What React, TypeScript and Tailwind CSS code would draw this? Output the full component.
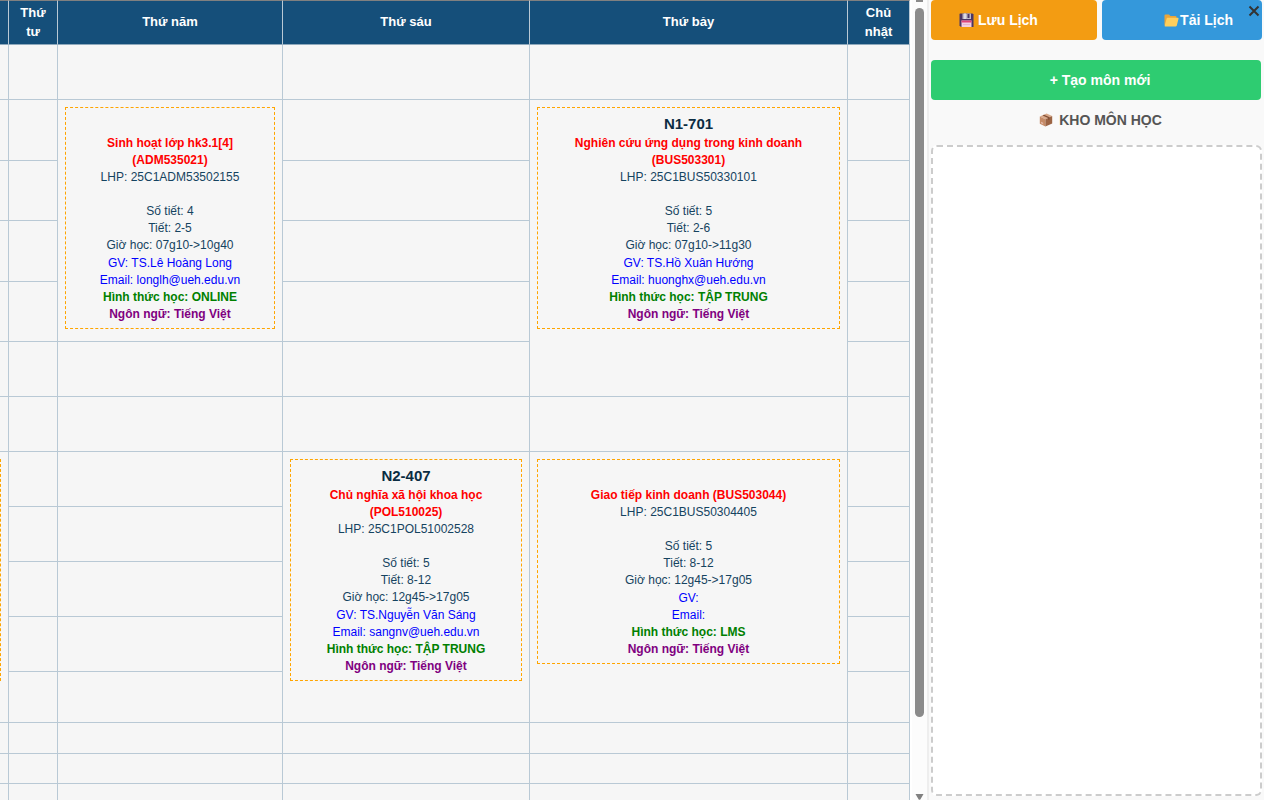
import { useState } from "react";

type Course = {
  room?: string;
  name: string[];
  classCode: string;
  count: number;
  periods: string;
  time: string;
  teacher?: string;
  email?: string;
  mode: string;
  lang: string;
};

type Slot = { span: number; course: Course };

const DAYS = ["Thứ ba", "Thứ tư", "Thứ năm", "Thứ sáu", "Thứ bảy", "Chủ nhật"];

const COL_WIDTHS = ["w-[9px]", "w-[49px]", "w-[225px]", "w-[247px]", "", "w-[62px]"];

const ROW_HEIGHTS = [
  "h-[55px]", "h-[61px]", "h-[60px]", "h-[61px]", "h-[60px]", "h-[55px]", "h-[55px]", "h-[55px]",
  "h-[55px]", "h-[55px]", "h-[55px]", "h-[51px]", "h-[31px]", "h-[30px]", "h-[31px]",
];

// key: "<period>-<day index>"
const SLOTS: Record<string, Slot> = {
  "2-2": {
    span: 4,
    course: {
      name: ["Sinh hoạt lớp hk3.1[4]", "(ADM535021)"],
      classCode: "25C1ADM53502155",
      count: 4,
      periods: "2-5",
      time: "07g10->10g40",
      teacher: "TS.Lê Hoàng Long",
      email: "longlh@ueh.edu.vn",
      mode: "ONLINE",
      lang: "Tiếng Việt",
    },
  },
  "2-4": {
    span: 5,
    course: {
      room: "N1-701",
      name: ["Nghiên cứu ứng dụng trong kinh doanh", "(BUS503301)"],
      classCode: "25C1BUS50330101",
      count: 5,
      periods: "2-6",
      time: "07g10->11g30",
      teacher: "TS.Hồ Xuân Hướng",
      email: "huonghx@ueh.edu.vn",
      mode: "TẬP TRUNG",
      lang: "Tiếng Việt",
    },
  },
  "8-3": {
    span: 5,
    course: {
      room: "N2-407",
      name: ["Chủ nghĩa xã hội khoa học", "(POL510025)"],
      classCode: "25C1POL51002528",
      count: 5,
      periods: "8-12",
      time: "12g45->17g05",
      teacher: "TS.Nguyễn Văn Sáng",
      email: "sangnv@ueh.edu.vn",
      mode: "TẬP TRUNG",
      lang: "Tiếng Việt",
    },
  },
  "8-4": {
    span: 5,
    course: {
      name: ["Giao tiếp kinh doanh (BUS503044)"],
      classCode: "25C1BUS50304405",
      count: 5,
      periods: "8-12",
      time: "12g45->17g05",
      mode: "LMS",
      lang: "Tiếng Việt",
    },
  },
};

function isCovered(period: number, day: number) {
  return Object.entries(SLOTS).some(([key, slot]) => {
    const [p, d] = key.split("-").map(Number);
    return d === day && period > p && period < p + slot.span;
  });
}

function CourseCard({ course }: { course: Course }) {
  return (
    <div className="cursor-move border border-dashed border-[#ffa500] py-[5px] text-center text-xs leading-[17px] text-[#154360]">
      <p className="h-[22px] text-[15px] leading-[22px] font-bold text-[#0b2c42]">{course.room}</p>
      {course.name.map((line) => (
        <p key={line} className="font-bold text-[#ff0000]">{line}</p>
      ))}
      <p>LHP: {course.classCode}</p>
      <p className="mt-[17px]">Số tiết: {course.count}</p>
      <p>Tiết: {course.periods}</p>
      <p>Giờ học: {course.time}</p>
      <div className="pt-px">
        <p className="text-[#0000ff]">GV: {course.teacher}</p>
        <p className="text-[#0000ff]">Email: {course.email}</p>
        <p className="font-bold text-[#008000]">Hình thức học: {course.mode}</p>
        <p className="font-bold text-[#800080]">Ngôn ngữ: {course.lang}</p>
      </div>
    </div>
  );
}

function Timetable() {
  return (
    <table className="w-full table-fixed border-separate border-spacing-0 bg-[#f6f6f6]">
      <colgroup>
        {COL_WIDTHS.map((w, i) => (
          <col key={i} className={w} />
        ))}
      </colgroup>
      <thead>
        <tr className="h-[45px]">
          {DAYS.map((day, i) => (
            <th
              key={day}
              className="border-t border-r border-b border-t-[#808080] border-r-[#b9c9d5] border-b-[#8fa9bc] bg-[#154f7a] p-0 pb-0.5 text-[13px] leading-[19px] font-bold text-white"
            >
              {i > 0 && <span className="block px-2">{day}</span>}
            </th>
          ))}
        </tr>
      </thead>
      <tbody>
        {ROW_HEIGHTS.map((height, row) => {
          const period = row + 1;
          return (
            <tr key={period} className={height}>
              {DAYS.map((day, i) => {
                // Tuesday's afternoon class is scrolled out, only its right edge shows
                if (i === 0 && period === 8) {
                  return (
                    <td key={day} rowSpan={5} className="border-r border-b border-[#b9c9d5] p-0 pt-[7px] align-top">
                      <div className="h-[222px] w-px border-r border-dashed border-[#ffa500]" />
                    </td>
                  );
                }
                if ((i === 0 && period > 8 && period < 13) || isCovered(period, i)) return null;
                const slot = SLOTS[`${period}-${i}`];
                return (
                  <td
                    key={day}
                    rowSpan={slot?.span}
                    className="border-r border-b border-[#b9c9d5] p-0 align-top"
                  >
                    {slot && (
                      <div className="p-[7px]">
                        <CourseCard course={slot.course} />
                      </div>
                    )}
                  </td>
                );
              })}
            </tr>
          );
        })}
      </tbody>
    </table>
  );
}

function SaveIcon() {
  return (
    <svg width="15" height="15" viewBox="0 0 15 15" aria-hidden="true">
      <path d="M1 0.5H13.5L14.5 1.5V14H2L0.5 12.5V1z" fill="#4a3565" />
      <rect x="3.5" y="0.5" width="8.5" height="5.5" fill="#bcb8c8" />
      <rect x="5" y="0.5" width="2" height="5.5" fill="#dcdae3" />
      <rect x="8.5" y="1" width="2" height="4" fill="#4a3565" />
      <rect x="2.5" y="7.5" width="10" height="6.5" fill="#f4cfe3" />
      <rect x="2.5" y="7.5" width="10" height="2" fill="#e0457b" />
      <path d="M4 11.5H11" stroke="#d8a9c6" strokeWidth="0.7" />
    </svg>
  );
}

function FolderIcon() {
  return (
    <svg width="15" height="13" viewBox="0 0 15 13" aria-hidden="true">
      <path d="M0.5 1.5Q0.5 0.5 1.5 0.5H5L6.5 2H11.5Q12.5 2 12.5 3V11H0.5z" fill="#eaa53a" />
      <path d="M3.6 3.8H13.8Q14.8 3.8 14.5 4.8L12.8 11.5Q12.5 12.5 11.5 12.5H1.2Q0.4 12.5 0.7 11.5L2.6 4.8Q2.8 3.8 3.6 3.8z" fill="#ffcf5c" />
    </svg>
  );
}

function BoxIcon() {
  return (
    <svg width="14" height="14" viewBox="0 0 14 14" aria-hidden="true">
      <path d="M0.8 3.6L7.6 0.6L13.2 3L6.4 6.2z" fill="#d9a98a" />
      <path d="M0.8 3.6L6.4 6.2V13.6L0.8 10.8z" fill="#c58a66" />
      <path d="M6.4 6.2L13.2 3V10.4L6.4 13.6z" fill="#9c6444" />
      <path d="M3.6 2.4L5 1.8L10.6 4.2V6.4L9.2 7V4.9z" fill="#7f4d34" />
      <path d="M2 8.8L4.2 9.8V11.4L2 10.3z" fill="#e3b7a6" />
    </svg>
  );
}

function ScrollRail() {
  return (
    <div className="ml-0.5 flex w-[15px] shrink-0 flex-col items-center bg-[#fcfcfc]" aria-hidden="true">
      <div className="h-0.5 w-[7px] bg-[#8b8b8b]" />
      <div className="mt-1.5 h-[709px] w-[9px] rounded-full bg-[#8b8b8b]" />
      <svg className="mt-auto" width="9" height="6" viewBox="0 0 9 6">
        <path d="M0.5 0H8.5L5.5 5.2Q4.5 6.2 3.5 5.2z" fill="#808080" />
      </svg>
    </div>
  );
}

export default function App() {
  const [open, setOpen] = useState(true);

  return (
    <div className="flex h-screen overflow-hidden bg-white pr-4 font-['Liberation_Sans',Arial,sans-serif]">
      <main className="min-w-0 flex-1 overflow-hidden">
        <Timetable />
      </main>
      <ScrollRail />

      {open && (
        <aside className="relative flex w-[337px] shrink-0 flex-col border-l-2 border-[#eeeeee] bg-[#f9f9f9] pr-0.5 pb-1 pl-0.5 text-sm font-bold">
          <div className="flex gap-[5px] text-white">
            <button className="flex h-10 flex-1 items-center gap-1 rounded bg-[#f39c12] pl-7">
              <SaveIcon /> Lưu Lịch
            </button>
            <button className="flex h-10 w-40 items-center justify-end gap-px rounded bg-[#3498db] pr-[29px]">
              <FolderIcon /> Tải Lịch
            </button>
          </div>
          <button
            onClick={() => setOpen(false)}
            aria-label="Đóng"
            className="absolute top-1 right-[3px] flex size-3.5 items-center justify-center text-[#333333]"
          >
            <svg width="12" height="12" viewBox="0 0 12 12">
              <path d="M1.5 1.5L10.5 10.5M10.5 1.5L1.5 10.5" stroke="currentColor" strokeWidth="2" />
            </svg>
          </button>

          <button className="mt-5 mr-px h-10 rounded bg-[#2ecc71] pl-2 text-white">+ Tạo môn mới</button>

          <h2 className="mt-2.5 flex h-5 items-center justify-center gap-1.5 pl-2 text-[#555555]">
            <BoxIcon /> KHO MÔN HỌC
          </h2>
          <div className="mt-[15px] flex-1 rounded-md border-2 border-dashed border-[#cccccc] bg-white" />
        </aside>
      )}
    </div>
  );
}
